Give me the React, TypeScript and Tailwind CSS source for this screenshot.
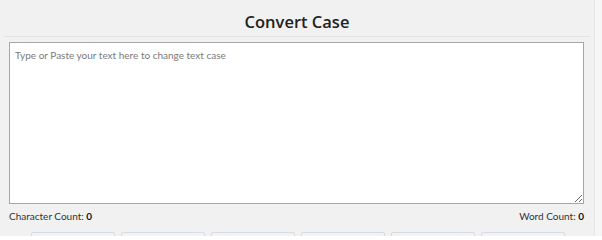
import React from "react";

const buttons = ["Sentence case", "lower case", "UPPER CASE", "Capitalized Case", "aLtErNaTiNg cAsE", "Title Case"];

export default function App() {
  return (
    <div className="flex h-[236px] w-[602px] overflow-hidden bg-[#f1f1f1] text-[#333]" style={{ fontFamily: '"Open Sans", "Noto Sans", sans-serif' }}>
      <div className="flex w-[594px] shrink-0 flex-col px-[4px]">
        <div className="flex h-[37px] shrink-0 items-start justify-center border-b border-[#e3e3e3] pt-[10px]">
          <h1 className="text-[16.5px] font-semibold leading-[24px] text-[#222]">Convert Case</h1>
        </div>
        <div className="flex shrink-0 flex-col px-[5px] pt-[5px]" style={{ fontFamily: 'Lato, "Open Sans", sans-serif' }}>
          <textarea
            className="h-[162px] w-[575px] shrink-0 border border-[#a6a6a6] bg-white px-[5px] py-[5px] text-[10px] leading-[14px] text-[#333] placeholder:text-[#7a7a7a] outline-none"
            placeholder="Type or Paste your text here to change text case"
          />
          <div className="mt-[5px] flex h-[14px] shrink-0 items-center justify-between text-[10px] leading-[14px] text-[#333]">
            <span>
              Character Count: <b className="font-bold text-[#111]">0</b>
            </span>
            <span className="mr-[1px]">
              Word Count: <b className="font-bold text-[#111]">0</b>
            </span>
          </div>
        </div>
        <div className="mt-[9px] flex shrink-0 justify-center gap-[6px] pl-[2px]">
          {buttons.map((b) => (
            <button
              key={b}
              className="h-[30px] w-[84px] shrink-0 rounded-[2px] border border-[#d6dce3] bg-[#f3f3f3] pt-[8px] text-[10px] text-[#333]"
            >
              {b}
            </button>
          ))}
        </div>
      </div>
      <div className="h-full w-[8px] shrink-0 border-l border-[#e6e6e6] bg-[#f6f6f6]" />
    </div>
  );
}
